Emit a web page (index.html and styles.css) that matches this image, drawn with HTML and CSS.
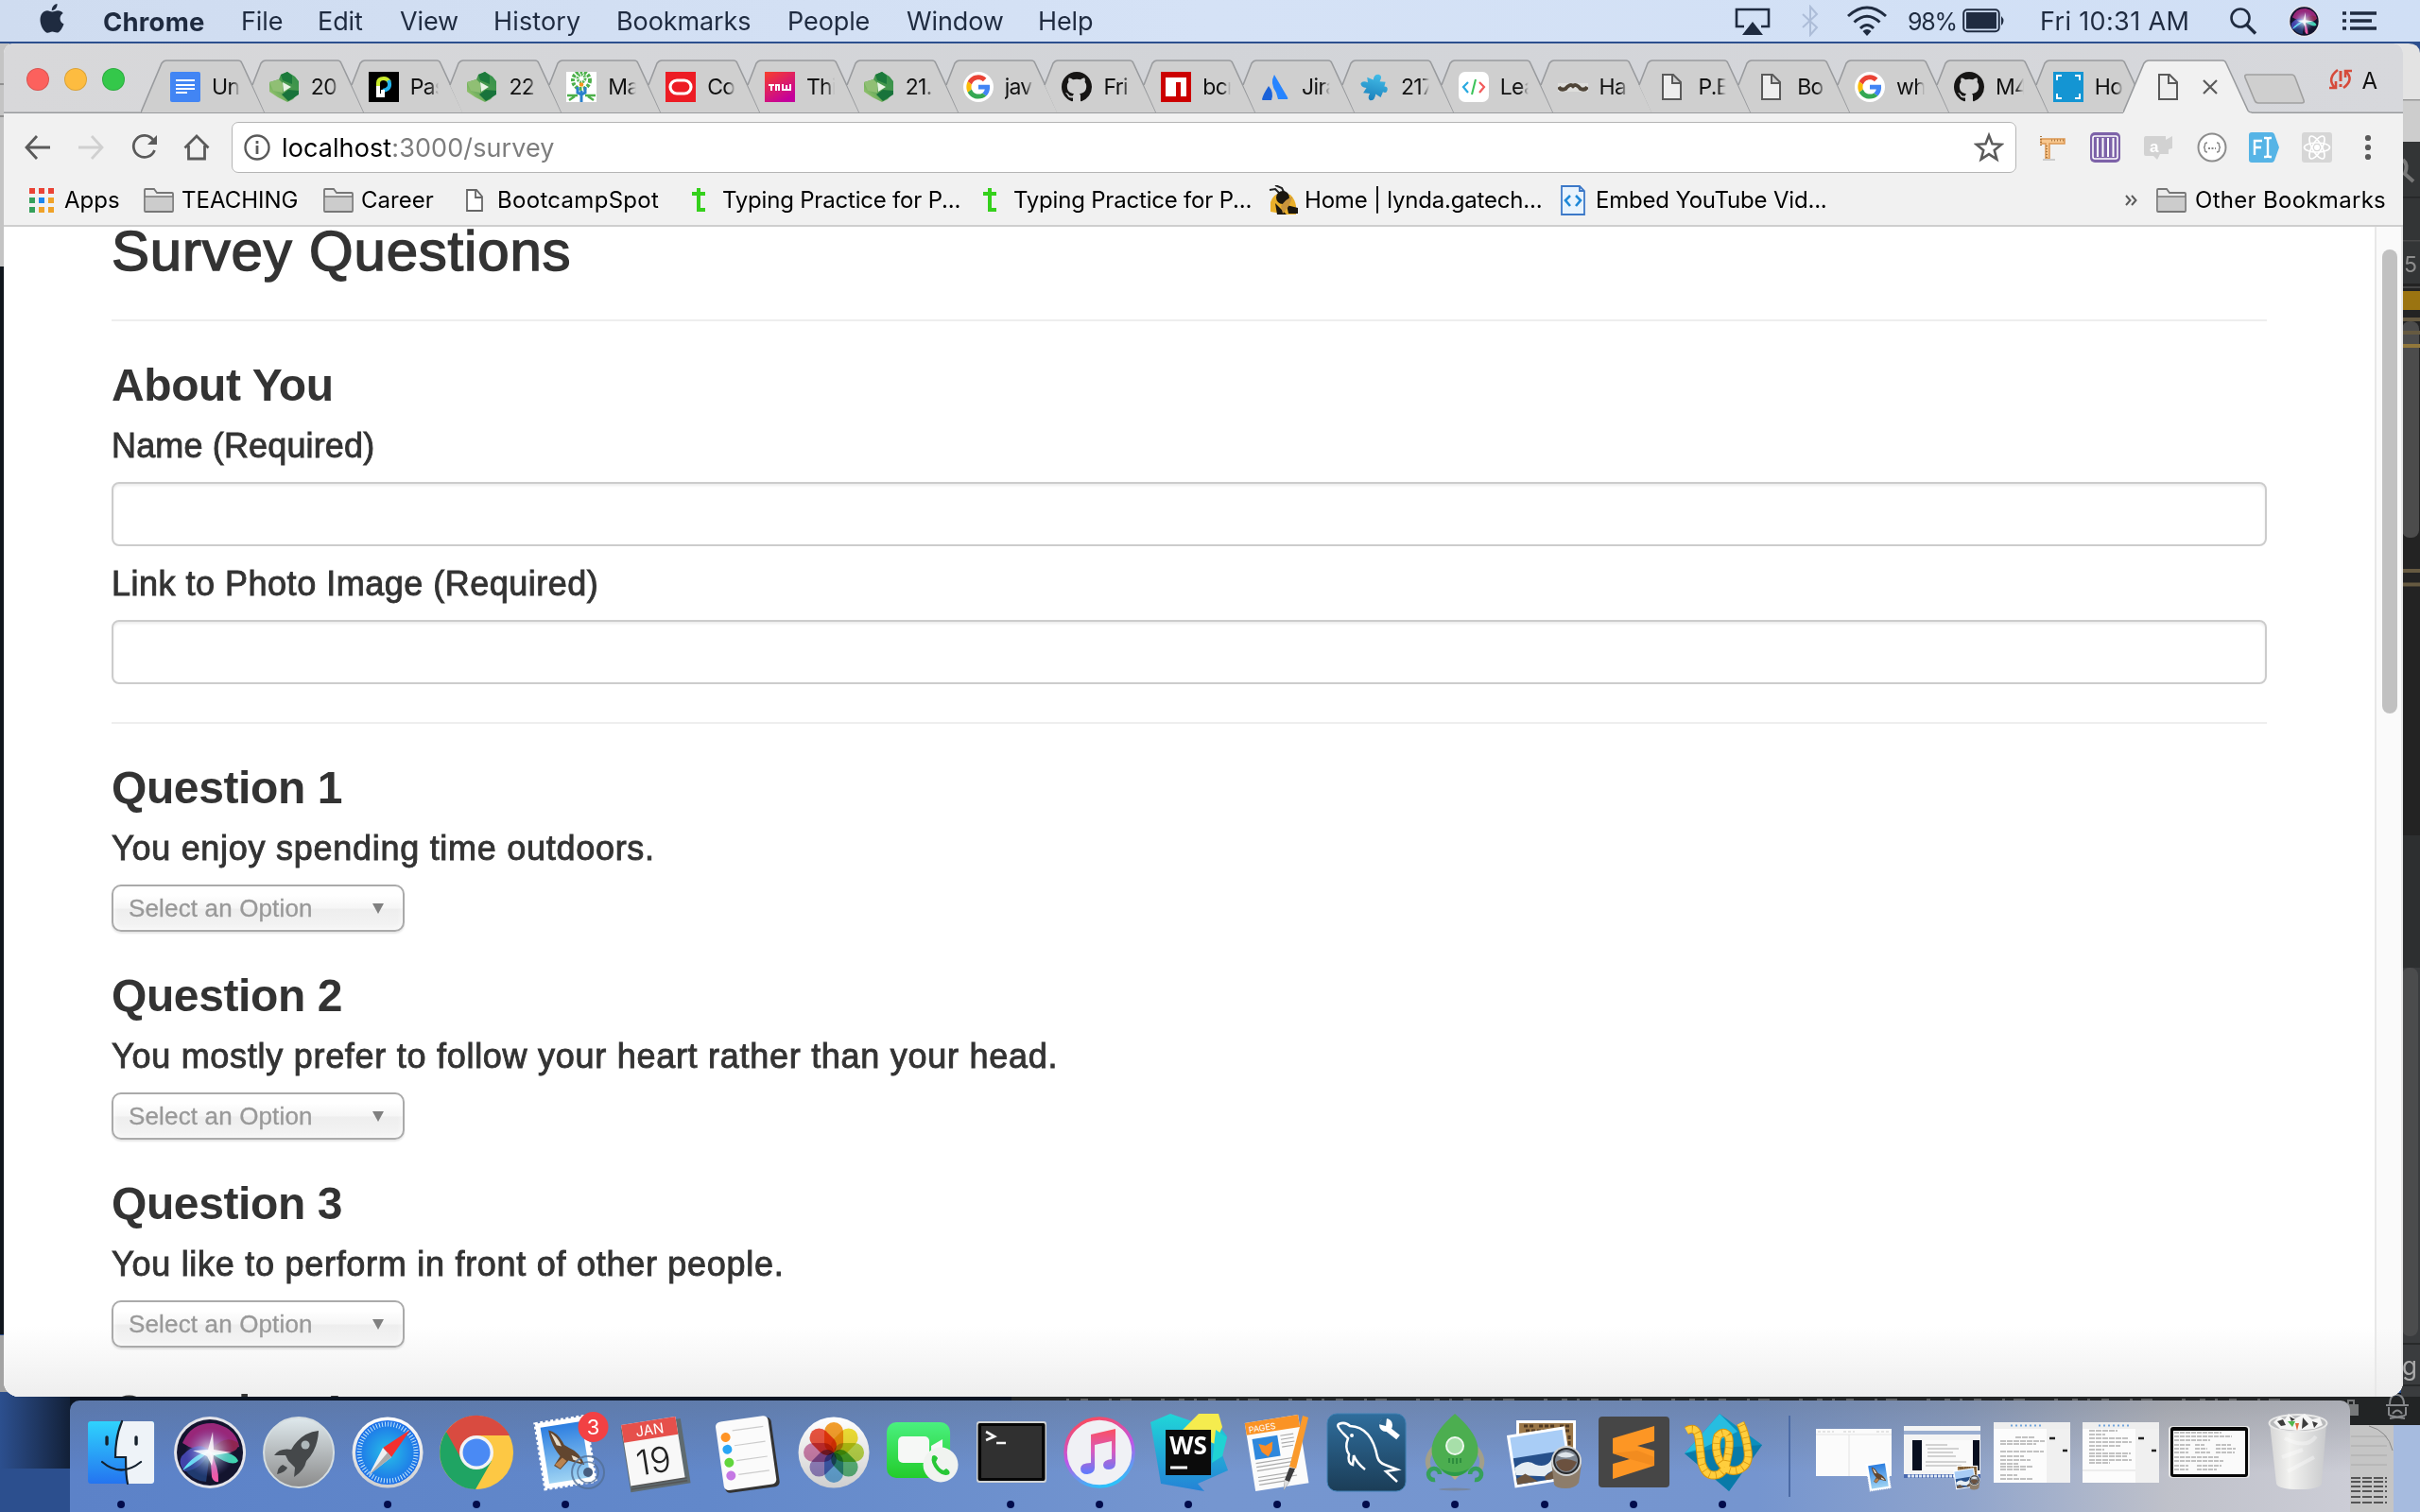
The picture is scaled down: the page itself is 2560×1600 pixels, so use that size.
FILE: index.html
```html
<!DOCTYPE html>
<html lang="en">
<head>
<meta charset="utf-8">
<title>Survey</title>
<link rel="stylesheet" href="styles.css">
</head>
<body>
<svg class="defs" width="0" height="0">
  <defs>
    <linearGradient id="gCam" x1="0" y1="1" x2="1" y2="0"><stop offset="0" stop-color="#b5d67c"/><stop offset=".5" stop-color="#4c9a4e"/><stop offset="1" stop-color="#2f8f4a"/></linearGradient>
    <radialGradient id="gSiri" cx=".5" cy=".5" r=".5"><stop offset="0" stop-color="#fff" stop-opacity=".9"/><stop offset=".4" stop-color="#c9e4fa" stop-opacity=".5"/><stop offset="1" stop-color="#7a6fd0" stop-opacity="0"/></radialGradient>
    <linearGradient id="gSilver" x1="0" y1="0" x2="0" y2="1"><stop offset="0" stop-color="#dfe9ed"/><stop offset="1" stop-color="#8b8b8b"/></linearGradient>
    <linearGradient id="gRim" x1="0" y1="0" x2="0" y2="1"><stop offset="0" stop-color="#fff"/><stop offset="1" stop-color="#cfcfcf"/></linearGradient>
    <linearGradient id="gSky" x1="0" y1="0" x2="0" y2="1"><stop offset="0" stop-color="#2c7ee0"/><stop offset="1" stop-color="#9ed3f3"/></linearGradient>
    <linearGradient id="gFinder" x1="0" y1="0" x2="0" y2="1"><stop offset="0" stop-color="#2fd3fd"/><stop offset="1" stop-color="#2474f0"/></linearGradient>
    <radialGradient id="gSafari"><stop offset="0" stop-color="#27c0e8"/><stop offset="1" stop-color="#1d6fe8"/></radialGradient>
    <linearGradient id="gFace" x1="0" y1="0" x2="0" y2="1"><stop offset="0" stop-color="#4af07f"/><stop offset="1" stop-color="#23cc2b"/></linearGradient>
    <linearGradient id="gItunes" x1=".3" y1="0" x2=".6" y2="1"><stop offset="0" stop-color="#fb4a5c"/><stop offset=".5" stop-color="#c054e8"/><stop offset="1" stop-color="#29c3fb"/></linearGradient>
    <linearGradient id="gNote" x1="0" y1="0" x2="0" y2="1"><stop offset="0" stop-color="#fb5060"/><stop offset=".5" stop-color="#d75ac0"/><stop offset="1" stop-color="#5b7bff"/></linearGradient>
    <linearGradient id="gSql" x1="0" y1="0" x2="0" y2="1"><stop offset="0" stop-color="#2f6d9c"/><stop offset="1" stop-color="#1b3d57"/></linearGradient>
    <linearGradient id="gWs" x1="0" y1="0" x2="0" y2="1"><stop offset="0" stop-color="#20d6d8"/><stop offset="1" stop-color="#2482d6"/></linearGradient>
    <linearGradient id="gTrash" x1="0" y1="0" x2="1" y2="0"><stop offset="0" stop-color="#d6d6d6"/><stop offset=".35" stop-color="#f2f2f0"/><stop offset="1" stop-color="#c9cacc"/></linearGradient>
    <linearGradient id="gTnw" x1="0" y1="0" x2=".6" y2="1"><stop offset="0" stop-color="#f8402b"/><stop offset="1" stop-color="#c4009c"/></linearGradient>
    <linearGradient id="gPuz" x1="0" y1="0" x2="0" y2="1"><stop offset="0" stop-color="#43bde8"/><stop offset="1" stop-color="#1b7fbb"/></linearGradient>
    <linearGradient id="gShade" x1="0" y1="0" x2="1" y2="0"><stop offset="0" stop-color="#111b2d" stop-opacity="0"/><stop offset="1" stop-color="#0b1422"/></linearGradient>
    <symbol id="tabFirst" viewBox="0 0 132 57"><path d="M0 56L22 4Q24 1 27 1H103Q106 1 107 4L131 56Z" fill="#cfcfcf"/><path d="M0 56L22 4Q24 1 27 1H103Q106 1 107 4L131 56" fill="none" stroke="#999b9e" stroke-width="1.6"/></symbol>
    <symbol id="tabNext" viewBox="0 0 132 57"><path d="M13 27L22 4Q24 1 27 1H103Q106 1 107 4L131 56H26Z" fill="#cfcfcf"/><path d="M13 27L22 4Q24 1 27 1H103Q106 1 107 4L131 56" fill="none" stroke="#999b9e" stroke-width="1.6"/></symbol>
    <symbol id="tabOn" viewBox="0 0 136 58"><path d="M0 58V56L22 4Q24 1 27 1H105Q108 1 109 4L132 54Q133 56 136 56V58Z" fill="#f1f1f1"/><path d="M0 56L22 4Q24 1 27 1H105Q108 1 109 4L132 54Q133 56 136 56" fill="none" stroke="#999b9e" stroke-width="1.6"/></symbol>
    <symbol id="cam" viewBox="0 0 32 32"><path d="M12 3L19 0L27 5L31 10V22L25 29L19 32L9 27L0 21V11L10 8Z" fill="url(#gCam)"/><path d="M12 3L19 0L24 4V13L14 9Z" fill="#1c7a3c"/><path d="M20 19L31 20V24L20 31L13 24Z" fill="#18733b"/><path d="M0 11L10 8L14 12V22L4 20Z" fill="#90bf74"/><path d="M14 11L23 16L15 21Z" fill="#e8f3e4"/></symbol>
    <symbol id="goog" viewBox="0 0 48 48"><circle cx="24" cy="24" r="24" fill="#fff"/><g transform="translate(5 5) scale(.79)"><path fill="#EA4335" d="M24 9.5c3.54 0 6.71 1.22 9.21 3.6l6.85-6.85C35.9 2.38 30.47 0 24 0 14.62 0 6.51 5.38 2.56 13.22l7.98 6.19C12.43 13.72 17.74 9.5 24 9.5z"/><path fill="#4285F4" d="M46.98 24.55c0-1.57-.15-3.09-.38-4.55H24v9.02h12.94c-.58 2.96-2.26 5.48-4.78 7.18l7.73 6c4.51-4.18 7.09-10.36 7.09-17.65z"/><path fill="#FBBC05" d="M10.53 28.59c-.48-1.45-.76-2.99-.76-4.59s.27-3.14.76-4.59l-7.98-6.19C.92 16.46 0 20.12 0 24c0 3.88.92 7.54 2.56 10.78l7.97-6.19z"/><path fill="#34A853" d="M24 48c6.48 0 11.93-2.13 15.89-5.81l-7.73-6c-2.15 1.45-4.92 2.3-8.16 2.3-6.26 0-11.57-4.22-13.47-9.91l-7.98 6.19C6.51 42.62 14.62 48 24 48z"/></g></symbol>
    <symbol id="gh" viewBox="0 0 16 16"><path fill="#161514" d="M8 0C3.58 0 0 3.58 0 8c0 3.54 2.29 6.53 5.47 7.59.4.07.55-.17.55-.38 0-.19-.01-.82-.01-1.49-2.01.37-2.53-.49-2.69-.94-.09-.23-.48-.94-.82-1.13-.28-.15-.68-.52-.01-.53.63-.01 1.08.58 1.23.82.72 1.21 1.87.87 2.33.66.07-.52.28-.87.51-1.07-1.78-.2-3.64-.89-3.64-3.95 0-.87.31-1.59.82-2.15-.08-.2-.36-1.02.08-2.12 0 0 .67-.21 2.2.82.64-.18 1.32-.27 2-.27.68 0 1.36.09 2 .27 1.53-1.04 2.2-.82 2.2-.82.44 1.1.16 1.92.08 2.12.51.56.82 1.27.82 2.15 0 3.07-1.87 3.75-3.65 3.95.29.25.54.73.54 1.48 0 1.07-.01 1.93-.01 2.2 0 .21.15.46.55.38A8.013 8.013 0 0016 8c0-4.42-3.58-8-8-8z"/></symbol>
    <symbol id="page" viewBox="0 0 32 32"><path d="M7 3H18L26 11V29H7ZM17 3V12H26" fill="#eee" stroke="#5a5a5a" stroke-width="2"/></symbol>
    <symbol id="folder" viewBox="0 0 32 26"><path d="M1 24V2Q1 1 2 1H11L14 5H30Q31 5 31 6V24Q31 25 30 25H2Q1 25 1 24Z" fill="#ececec" stroke="#777" stroke-width="1.8"/><path d="M1.800 9H30.200V24H1.800Z" fill="#ccc"/><path d="M1 9H31" stroke="#777" stroke-width="1.6"/></symbol>
    <symbol id="typing" viewBox="0 0 16 28"><path d="M7 1V24H14M0 7H14" fill="none" stroke="#35d01c" stroke-width="4"/></symbol>
    <symbol id="siri" viewBox="-38 -38 76 76"><circle r="38" fill="#e4e4ea"/><circle r="35" fill="#13142e"/><path d="M-29 -10Q-20 -32 4 -31Q28 -26 31 -6Q14 -2 0 -2Q-18 -2 -29 -10Z" fill="#b02a86" opacity=".85"/><path d="M2 -3Q16 -20 30 -10Q31 4 2 -1Z" fill="#8e2550"/><path d="M-30 4Q-14 -14 0 -2Q-8 18 -27 20Q-34 12 -30 4Z" fill="#4f4fc8" opacity=".8"/><path d="M-27 18Q-18 30 -4 31L0 0Z" fill="#274a8c" opacity=".7"/><path d="M0 -2Q10 16 9 31Q4 32 2 26Z" fill="#ee5aa8"/><path d="M0 0Q26 -2 30 9Q24 17 0 0Z" fill="#3fd3b0"/><path d="M-29 19Q-18 2 0 -2Q-10 8 -29 19Z" fill="#62e3f5"/><circle r="26" fill="url(#gSiri)"/><path d="M-18 -2L-2 -3L3 -22L4 -3L23 0L4 3L2 14L-3 4Z" fill="#fff" opacity=".8"/></symbol>
    <symbol id="mail" viewBox="-36 -44 72 88"><g transform="rotate(-9)"><rect x="-27" y="-35" width="54" height="70" fill="#fff" stroke="#fff" stroke-width="3" stroke-dasharray="3 2.500"/><rect x="-22" y="-30" width="44" height="60" fill="url(#gSky)"/><path d="M-14 -26Q-4 -22 0 -8L5 -4Q15 2 18 16L8 12L2 9L-8 17L-14 12L-6 3Q-14 -10 -14 -26Z" fill="#62462f"/><path d="M-12 -23Q-5 -17 -3 -7L-8 -9ZM6 4Q13 7 15 13L7 9Z" fill="#e6dccb"/><path d="M-13 11L-4 5L0 9L-8 16Z" fill="#b98350"/></g></symbol>
    <symbol id="preview" viewBox="-40 -42 80 84"><rect x="-30" y="-34" width="63" height="48" fill="#fff"/><rect x="-27" y="-31" width="57" height="42" fill="#9b7748"/><path d="M-22 -28h12m4 0h18m4 0h10M-20 -23h46M26 -18v22" stroke="#4f3821" stroke-width="3" stroke-dasharray="4 2"/><g transform="translate(0 -1) rotate(-9)"><rect x="-37" y="-23" width="62" height="56" fill="#fff"/><rect x="-34" y="-20" width="56" height="50" fill="#a9cdf6"/><path d="M-34 2H22V30H-34Z" fill="#26508b"/><path d="M-34 12Q-20 4 -12 12Q0 18 6 9L22 15V22Q4 18 -4 26L-34 20Z" fill="#e5edf3"/><path d="M-34 24L-24 20L-12 30H-34ZM-4 26L12 18L22 23V30H-4Z" fill="#6c5641"/></g><path d="M7 10L10 34Q12 38 22 38Q32 38 36 32L39 12Z" fill="#8d7d6b"/><circle cx="23" cy="9" r="16" fill="#d0d2d2"/><circle cx="23" cy="9" r="14" fill="#26282b"/><circle cx="23" cy="9" r="12" fill="#7d8691"/><path d="M12 10Q20 4 34 10Q30 20 22 20Q14 19 12 10Z" fill="#6b513f"/><path d="M13 3Q22 -4 32 3Q22 8 13 3Z" fill="#dde4ea"/></symbol>
  </defs>
</svg>

<div class="desktop">
  <svg class="backdrop" viewBox="0 0 2560 1600">
    <rect width="2560" height="1600" fill="#2c4f8e"/>
    <rect x="0" y="1474" width="90" height="80" fill="url(#gShade)"/>
    <rect x="74" y="1474" width="2486" height="34" fill="#0b1422"/>
    <path d="M0 46H10V282H0Z" fill="#c4c4c4"/><path d="M0 88H10V90H0ZM0 122H10V124H0Z" fill="#909090"/>
    <rect y="282" width="10" height="1130" fill="#10161d"/><rect y="1413" width="10" height="60" fill="#a3a3a3"/>
    <path d="M2530 46H2548Q2559 46 2560 56V150H2530Z" fill="#e3e3e3"/>
    <rect x="2540" y="105" width="20" height="45" fill="#cdcdcd"/><rect x="2540" y="105" width="20" height="1.500" fill="#999"/>
    <rect x="2540" y="150" width="20" height="150" fill="#333536"/><rect x="2540" y="208" width="20" height="1.500" fill="#242526"/><rect x="2540" y="254" width="20" height="1.500" fill="#4a4a4a"/>
    <path d="M2542 169Q2548 174 2544 184L2553 192" fill="none" stroke="#777" stroke-width="4"/>
    <rect x="2540" y="300" width="20" height="724" fill="#232323"/><rect x="2540" y="303" width="20" height="2" fill="#454545"/>
    <rect x="2540" y="308" width="20" height="20" fill="#9b7411"/>
    <rect x="2541" y="340" width="18" height="229" rx="8" fill="#4c4c4c"/>
    <path d="M2540 338H2560M2540 352H2560M2540 604H2560M2540 618.500H2560" stroke="#665a41" stroke-width="4"/><path d="M2540 366H2560" stroke="#92783b" stroke-width="4"/>
    <rect x="2540" y="884" width="20" height="140" fill="#2d2f30"/><rect x="2540" y="1024" width="20" height="484" fill="#3a3c3e"/>
    <rect x="2541" y="1024" width="17" height="390" rx="8" fill="#4b4c4d"/><path d="M2540 1422H2560M2540 1466H2560" stroke="#27292a" stroke-width="2"/>
    <text x="2543" y="288" class="bgText">5</text><text x="2541" y="1455" class="bgText big">g</text>
    <rect x="1070" y="1478" width="1490" height="30" fill="#222425"/>
    <path d="M1128 1481H2430" stroke="#5c5d5e" stroke-width="2" stroke-dasharray="3 12 8 22 3 9 12 31 4 15 6 10"/>
    <rect x="2482" y="1486" width="13" height="12" fill="#77797a"/><path d="M2484 1488V1482H2490V1486" fill="none" stroke="#77797a" stroke-width="2"/>
    <path d="M2528 1486Q2528 1476 2535 1476Q2543 1476 2543 1486M2524 1487H2548M2527 1489V1497Q2536 1503 2545 1497V1489M2531 1496Q2536 1489 2541 1496M2528 1501L2544 1498M2528 1498L2544 1501" fill="none" stroke="#85878a" stroke-width="2"/>
    <rect x="2480" y="1508" width="80" height="92" fill="#a6bbdf"/><rect x="2480" y="1508" width="52" height="92" fill="#c5c5c5"/>
    <path d="M2487 1520H2525M2487 1530H2525M2487 1540H2525M2487 1550H2525" stroke="#aaa" stroke-width="1"/><path d="M2506 1509Q2526 1514 2531 1535" fill="none" stroke="#888"/>
    <path d="M2487 1564H2525M2487 1568H2525M2487 1573H2525M2487 1578H2525M2487 1584H2525M2487 1590H2525" stroke="#555" stroke-width="2" stroke-dasharray="10 2"/>
  </svg>

  <header class="menubar">
    <svg class="apple" viewBox="0 0 25 32"><path d="M12.600 8.500C14.500 8.500 16.500 7 19 7.200C21 7.300 23 8.200 24.200 10C19.500 13 20.300 19.500 25 21.300C24 24.500 21.500 29.500 18.700 30.500C16.500 31 15 29.600 12.900 29.600C10.500 29.600 9.300 31.200 7.200 30.800C3.500 29.500 0 22.500 0 17C0 11 3.500 7.300 7.500 7.200C9.500 7.200 11.500 8.500 12.600 8.500ZM12.300 7.200C12 3.700 14.700 .5 18 0C18.400 3.800 15.500 7.200 12.300 7.200Z" fill="#1f2b40"/></svg>
    <b class="app">Chrome</b><span>File</span><span>Edit</span><span>View</span><span class="history">History</span><span>Bookmarks</span><span>People</span><span>Window</span><span>Help</span>
    <svg width="38" height="32" viewBox="0 0 38 32"><path d="M10 22H2V4H36V22H28" fill="none" stroke="#1f2b40" stroke-width="2.600"/><path d="M19 17L30 31H8Z" fill="#1f2b40"/></svg>
    <svg width="22" height="34" viewBox="0 0 22 34"><path d="M3 10L18 24L11 32V2L18 10L3 24" fill="none" stroke="#adbdd8" stroke-width="2"/></svg>
    <svg width="44" height="32" viewBox="0 0 44 32"><path d="M2 11Q22 -7 42 11M8.500 17.500Q22 5 35.500 17.500M15 24Q22 17 29 24" fill="none" stroke="#1f2b40" stroke-width="3"/><path d="M17.500 27Q22 23 26.500 27L22 32Z" fill="#1f2b40"/></svg>
    <span class="pct">98%</span>
    <svg width="46" height="26" viewBox="0 0 46 26"><rect x="1.200" y="1.200" width="37.500" height="23" rx="4" fill="none" stroke="#1f2b40" stroke-width="2"/><rect x="4" y="4" width="32" height="17.500" fill="#1f2b40"/><path d="M41 8Q46 13 41 18Z" fill="#1f2b40"/></svg>
    <span class="clock">Fri 10:31 AM</span>
    <svg width="32" height="30" viewBox="0 0 32 30"><circle cx="12" cy="12" r="9.500" fill="none" stroke="#1f2b40" stroke-width="2.600"/><path d="M18.500 19L28 28.500" stroke="#1f2b40" stroke-width="3.400"/></svg>
    <svg width="33" height="33"><use href="#siri"/></svg>
    <svg width="38" height="22" viewBox="0 0 38 22"><path d="M1 3H5M1 11H5M1 19H5M9 3H37M9 11H32M9 19H37" stroke="#1f2b40" stroke-width="3.600"/></svg>
  </header>

  <main class="window">
    <div class="tabstrip">
      <div class="lights"><i class="red"></i><i class="amber"></i><i class="green"></i></div>
      <div class="tabs">
        <div class="tab"><svg class="shape"><use href="#tabFirst"/></svg><svg class="fav" viewBox="0 0 32 32"><rect width="32" height="32" rx="2" fill="#4285f4"/><path d="M6 9H26M6 14H26M6 18H26M6 22H18" stroke="#fff" stroke-width="2"/></svg><span>Un</span></div>
        <div class="tab"><svg class="shape"><use href="#tabNext"/></svg><svg class="fav"><use href="#cam"/></svg><span>20</span></div>
        <div class="tab"><svg class="shape"><use href="#tabNext"/></svg><svg class="fav" viewBox="0 0 32 32"><rect width="32" height="32"/><path d="M10 18V12Q10 7 16 7Q20 7 22 11" fill="none" stroke="#c9ec2c" stroke-width="4"/><path d="M21 9Q25 18 15 20" fill="none" stroke="#22b5ee" stroke-width="4"/><path d="M10 15V25H15V19" fill="none" stroke="#fff" stroke-width="4"/></svg><span>Pas</span></div>
        <div class="tab"><svg class="shape"><use href="#tabNext"/></svg><svg class="fav"><use href="#cam"/></svg><span>22</span></div>
        <div class="tab"><svg class="shape"><use href="#tabNext"/></svg><svg class="fav" viewBox="0 0 32 32"><rect width="32" height="32" fill="#fff"/><circle cx="16" cy="9" r="9" fill="none" stroke="#4cb04a" stroke-width="4" stroke-dasharray="3 1.500"/><circle cx="16" cy="7" r="4" fill="none" stroke="#58b957" stroke-width="3" stroke-dasharray="2 1"/><circle cx="16" cy="13.500" r="2.300" fill="#f79420"/><path d="M16 32V20M12 16V22L16 24L20 22V16" fill="none" stroke="#2a80cc" stroke-width="3"/><path d="M1 25H12M20 25H31M3 30L9 26M29 30L23 26" stroke="#4cb04a" stroke-width="2.400"/></svg><span>Ma</span></div>
        <div class="tab"><svg class="shape"><use href="#tabNext"/></svg><svg class="fav" viewBox="0 0 32 32"><rect width="32" height="32" fill="#ed1c24"/><rect x="5" y="9" width="22" height="14" rx="7" fill="none" stroke="#fff" stroke-width="3.200"/></svg><span>Co</span></div>
        <div class="tab"><svg class="shape"><use href="#tabNext"/></svg><svg class="fav" viewBox="0 0 32 32"><rect width="32" height="32" fill="url(#gTnw)"/><path d="M4 14H10M7 14V20M12 20V14H15V20M19 13V19H27V13M23 14V19" fill="none" stroke="#fff" stroke-width="2"/></svg><span>Thi</span></div>
        <div class="tab"><svg class="shape"><use href="#tabNext"/></svg><svg class="fav"><use href="#cam"/></svg><span>21.</span></div>
        <div class="tab"><svg class="shape"><use href="#tabNext"/></svg><svg class="fav"><use href="#goog"/></svg><span>jav</span></div>
        <div class="tab"><svg class="shape"><use href="#tabNext"/></svg><svg class="fav"><use href="#gh"/></svg><span>Fri</span></div>
        <div class="tab"><svg class="shape"><use href="#tabNext"/></svg><svg class="fav" viewBox="0 0 32 32"><rect width="32" height="32" fill="#c00"/><path d="M5 6H27V26H21V11H16V26H5Z" fill="#fff"/></svg><span>bcr</span></div>
        <div class="tab"><svg class="shape"><use href="#tabNext"/></svg><svg class="fav" viewBox="0 0 32 32"><path d="M15 3Q10 12 17 22L19 29H28Q30 29 29 27Z" fill="#2684ff"/><path d="M9 15Q3 24 2 29Q2 30 3 30H12Q15 22 9 15Z" fill="#1b62d8"/></svg><span>Jira</span></div>
        <div class="tab"><svg class="shape"><use href="#tabNext"/></svg><svg class="fav" viewBox="0 0 32 32"><path d="M13 9Q12 3 17 2Q22 2 20 9L26 8L26 13Q30 12 30 16Q30 20 26 19L25 25L19 23Q20 30 15 31Q11 30 13 24L6 25L8 19Q2 20 1 16Q2 12 8 13L6 8Z" fill="url(#gPuz)" transform="rotate(14 16 16)"/></svg><span>217</span></div>
        <div class="tab"><svg class="shape"><use href="#tabNext"/></svg><svg class="fav" viewBox="0 0 32 32"><rect width="32" height="32" rx="7" fill="#fff"/><path d="M10 11L5 16L10 22" fill="none" stroke="#29a9e0" stroke-width="2.200"/><path d="M18 8L14 24" stroke="#3cc35a" stroke-width="2"/><path d="M22 11L27 16L22 22" fill="none" stroke="#f25b5b" stroke-width="2.200"/></svg><span>Lea</span></div>
        <div class="tab"><svg class="shape"><use href="#tabNext"/></svg><svg class="fav" viewBox="0 0 32 32"><path d="M0 12H32V21H0Z" fill="#dededc"/><path d="M1 16Q3 20 8 18Q13 12 16 15Q19 12 24 18Q29 20 31 16" fill="none" stroke="#4e4437" stroke-width="4"/></svg><span>Hal</span></div>
        <div class="tab"><svg class="shape"><use href="#tabNext"/></svg><svg class="fav"><use href="#page"/></svg><span>P.E</span></div>
        <div class="tab"><svg class="shape"><use href="#tabNext"/></svg><svg class="fav"><use href="#page"/></svg><span>Bo</span></div>
        <div class="tab"><svg class="shape"><use href="#tabNext"/></svg><svg class="fav"><use href="#goog"/></svg><span>wh</span></div>
        <div class="tab"><svg class="shape"><use href="#tabNext"/></svg><svg class="fav"><use href="#gh"/></svg><span>M4</span></div>
        <div class="tab"><svg class="shape"><use href="#tabNext"/></svg><svg class="fav" viewBox="0 0 32 32"><rect width="32" height="32" fill="#1495d3"/><path d="M4 9V4H9M23 4H28V9M28 23V28H23M9 28H4V23" fill="none" stroke="#fff" stroke-width="2"/></svg><span>Ho</span></div>
        <div class="tab on"><svg class="shape"><use href="#tabOn"/></svg><svg class="fav"><use href="#page"/></svg><svg class="close" viewBox="0 0 16 16"><path d="M1 1L15 15M15 1L1 15" stroke="#5a5a5a" stroke-width="2.200"/></svg></div>
      </div>
      <svg class="newtab" viewBox="0 0 68 34"><path d="M4 1H51Q54 1 55 4L64 28Q65 31 62 31H16Q13 31 12 28L2 4Q1 1 4 1Z" fill="#cfcfcf" stroke="#a0a0a0" stroke-width="1.600"/></svg>
      <svg class="sync" viewBox="0 0 26 24"><path d="M10 2Q-2 11 7 21M1 21H8V14M16 21Q28 12 18 3M25 3H18V10" fill="none" stroke="#d64b3b" stroke-width="2.600"/><path d="M13 3V14M13 17V20" stroke="#d64b3b" stroke-width="3"/></svg>
      <span class="profile">A</span>
    </div>

    <div class="toolbar">
      <svg width="32" height="28" viewBox="0 0 32 28"><path d="M15 2L4 14L15 26M4 14H29" fill="none" stroke="#5a5a5a" stroke-width="2.800"/></svg>
      <svg width="32" height="28" viewBox="0 0 32 28"><path d="M16 2L27 14L16 26M27 14H2" fill="none" stroke="#d0d0d0" stroke-width="2.800"/></svg>
      <svg width="32" height="30" viewBox="0 0 32 30"><path d="M25 7A11.500 11.500 0 1 0 26.500 18" fill="none" stroke="#5a5a5a" stroke-width="2.800"/><path d="M29 2V12H19Z" fill="#5a5a5a"/></svg>
      <svg width="30" height="30" viewBox="0 0 30 30"><path d="M2.500 15.500L15 3L27.500 15.500M6.500 13V27H23.500V13" fill="none" stroke="#5a5a5a" stroke-width="2.800"/></svg>
      <div class="url">
        <svg width="28" height="28" viewBox="0 0 28 28"><circle cx="14" cy="14" r="12.500" fill="none" stroke="#5a5a5a" stroke-width="2.400"/><path d="M14 12V21M14 7V10" stroke="#5a5a5a" stroke-width="2.800"/></svg>
        <p>localhost<em>:3000/survey</em></p>
        <svg class="star" viewBox="0 0 30 30"><path d="M15 3L18.300 11.500L27.500 12L20.400 17.800L22.800 26.800L15 21.700L7.200 26.800L9.600 17.800L2.500 12L11.700 11.500Z" fill="none" stroke="#5a5a5a" stroke-width="2.400"/></svg>
      </div>
      <svg width="32" height="32" viewBox="0 0 32 32"><path d="M3 7H28V12H12V28H8V12H3Z" fill="#f8c890" stroke="#dc9650" stroke-width="1.500"/><path d="M3 4V14M14 8.500H28M9 14V27" stroke="#a87840" stroke-dasharray="1 2" stroke-width="2"/><path d="M5 29H18" stroke="#ccc" stroke-width="2"/></svg>
      <svg width="32" height="32" viewBox="0 0 32 32"><rect width="32" height="32" rx="5" fill="#7d62a8"/><rect x="3" y="4" width="26" height="24" rx="2" fill="none" stroke="#fff" stroke-width="1.600"/><path d="M8 6V26M13.500 6V26M19 6V26M24.500 6V26" stroke="#fff" stroke-width="2"/></svg>
      <svg width="32" height="32" viewBox="0 0 32 32"><path d="M3 4H24V8L31 4V17L27 18V23H18L15 29L11 25H3Q1 25 1 23V7Q1 4 3 4Z" fill="#d2d2d2"/><text x="7" y="21" class="extA">a</text></svg>
      <svg width="32" height="32" viewBox="0 0 32 32"><circle cx="16" cy="16" r="14.500" fill="#fff" stroke="#8d8d8d" stroke-width="2"/><path d="M11 11Q8 11 8.500 14Q8 16 7 16Q8 16 8.500 18Q8 21 11 21M21 11Q24 11 23.500 14Q24 16 25 16Q24 16 23.500 18Q24 21 21 21" fill="none" stroke="#888" stroke-width="1.500"/><path d="M12 17H20" stroke="#888" stroke-width="1.800" stroke-dasharray="2 1.500"/></svg>
      <svg width="32" height="32" viewBox="0 0 32 32"><path d="M3 0H24Q26 0 27 2L32 16L27 30Q26 32 24 32H3Q0 32 0 29V3Q0 0 3 0Z" fill="#56b4e6"/><path d="M6 24V9H14M6 16H13M16 6H19Q20 6 20 8V24Q20 26 18 26H16M24 6H22Q20 6 20 8M24 26H22Q20 26 20 24" fill="none" stroke="#fff" stroke-width="2.400"/></svg>
      <svg width="32" height="32" viewBox="0 0 32 32"><rect width="32" height="32" rx="3" fill="#d6d6d6"/><g fill="none" stroke="#fff" stroke-width="1.700"><ellipse cx="16" cy="16" rx="13.500" ry="5"/><ellipse cx="16" cy="16" rx="13.500" ry="5" transform="rotate(60 16 16)"/><ellipse cx="16" cy="16" rx="13.500" ry="5" transform="rotate(120 16 16)"/></g><circle cx="16" cy="16" r="3" fill="#fff"/></svg>
      <svg width="22" height="28" viewBox="0 0 22 28"><g fill="#5a5a5a"><circle cx="11" cy="4" r="3.100"/><circle cx="11" cy="14" r="3.100"/><circle cx="11" cy="24" r="3.100"/></g></svg>
    </div>

    <nav class="bookmarks">
      <svg width="26" height="26" viewBox="0 0 26 26"><path d="M0 0h6v6H0zM10 0h6v6h-6zM20 0h6v6h-6z" fill="#ea4335"/><path d="M0 10h6v6H0zM0 20h6v6H0z" fill="#34a05a"/><path d="M10 10h6v6h-6z" fill="#1a86ee"/><path d="M20 10h6v6h-6zM10 20h6v6h-6zM20 20h6v6h-6z" fill="#f0a228"/></svg><span>Apps</span>
      <svg width="32" height="26"><use href="#folder"/></svg><span>TEACHING</span>
      <svg width="32" height="26"><use href="#folder"/></svg><span>Career</span>
      <svg width="18" height="24" viewBox="0 0 18 24"><path d="M1 1H11L17 8V23H1ZM10 1V9H17" fill="#fff" stroke="#666" stroke-width="1.800"/></svg><span class="wide">BootcampSpot</span>
      <svg width="16" height="28"><use href="#typing"/></svg><span class="tight">Typing Practice for P...</span>
      <svg width="16" height="28"><use href="#typing"/></svg><span class="tight">Typing Practice for P...</span>
      <svg width="32" height="32" viewBox="0 0 32 32"><path d="M2 5L8 4L14 10M8 0L15 3L18 9" fill="none" stroke="#222" stroke-width="2"/><path d="M3 18Q6 9 14 8L24 10Q29 15 30 22V31H20L3 28Z" fill="#eab02a"/><circle cx="16" cy="13" r="7" fill="#1b1710"/><path d="M8 19L20 31H10ZM20 21L32 24V30H22Z" fill="#1b1710"/><path d="M14 22Q20 14 26 12Q24 22 16 30Z" fill="#c8943c"/></svg><span class="tight">Home | lynda.gatech...</span>
      <svg width="26" height="32" viewBox="0 0 26 32"><path d="M1 1H20L25 6V31H1Z" fill="#e8f3fd" stroke="#3b78c8" stroke-width="1.800"/><path d="M20 1V6H25" fill="none" stroke="#3b78c8" stroke-width="1.800"/><path d="M10 11L5 16L10 22M16 11L21 16L16 22" fill="none" stroke="#1e88d8" stroke-width="2.600"/></svg><span class="tight">Embed YouTube Vid...</span>
      <svg width="13" height="14" viewBox="0 0 13 14"><path d="M1 2L5.500 7L1 12M7 2L11.500 7L7 12" fill="none" stroke="#5a5a5a" stroke-width="2"/></svg>
      <svg width="32" height="26"><use href="#folder"/></svg><span class="wide">Other Bookmarks</span>
    </nav>

    <div class="viewport">
      <form class="survey">
        <h1>Survey Questions</h1>
        <hr>
        <h2 class="about">About You</h2>
        <h3 class="n1">Name (Required)</h3>
        <input type="text">
        <h3 class="n2">Link to Photo Image (Required)</h3>
        <input type="text">
        <hr class="second">
        <section><h2>Question 1</h2><h3>You enjoy spending time outdoors.</h3><div class="select">Select an Option<i></i></div></section>
        <section><h2>Question 2</h2><h3>You mostly prefer to follow your heart rather than your head.</h3><div class="select">Select an Option<i></i></div></section>
        <section><h2>Question 3</h2><h3>You like to perform in front of other people.</h3><div class="select">Select an Option<i></i></div></section>
        <section><h2>Question 4</h2></section>
      </form>
      <div class="track"><div class="thumb"></div></div>
    </div>
  </main>

  <footer class="dock">
    <svg class="app-icon" viewBox="-47 0 94 118"><rect x="-35" y="22" width="70" height="66" rx="3" fill="url(#gFinder)"/><path d="M1 22H32Q35 22 35 25V85Q35 88 32 88H7Q5 80 5 60H-6Q-5 36 1 22Z" fill="#eef3f8"/><path d="M-15 39V46M16 39V46" stroke="#15202b" stroke-width="3.400" stroke-linecap="round"/><path d="M-20 65Q0 82 21 65M1 22Q-6 38 -6 60H5Q5 80 7 88" fill="none" stroke="#13202e" stroke-width="2.200" stroke-linecap="round"/><circle cy="110" r="4" fill="#020c4c"/></svg>
    <svg class="app-icon" viewBox="-47 0 94 118"><use href="#siri" x="-38" y="17" width="76" height="76"/></svg>
    <svg class="app-icon" viewBox="-47 0 94 118"><circle cy="55" r="37" fill="url(#gSilver)" stroke="#d5dde0" stroke-width="2"/><path d="M21 32Q2 34 -8 52Q-20 50 -26 58L-14 58L-11 64L-4 71L-5 81Q6 74 8 64Q20 52 21 32Z" fill="#45484a"/><circle cx="7" cy="47" r="4.500" fill="#aeb8bb"/><path d="M-17 68Q-22 70 -23 78Q-14 76 -12 71Z" fill="#45484a"/></svg>
    <svg class="app-icon" viewBox="-47 0 94 118"><circle cy="55" r="37.500" fill="url(#gRim)"/><circle cy="55" r="34" fill="url(#gSafari)"/><circle cy="55" r="30" fill="none" stroke="#c8e8fa" stroke-width="5" stroke-dasharray="1 2.140"/><path d="M24 31L-5 50L4 60Z" fill="#f3302e"/><path d="M-20 79L-5 50L4 60Z" fill="#eef0f2"/><path d="M-20 79L0 55L4 60Z" fill="#aaa"/><circle cy="110" r="4" fill="#020c4c"/></svg>
    <svg class="app-icon" viewBox="-47 0 94 118"><circle cy="55" r="39" fill="#fdc844"/><path d="M-32 33A39 39 0 0 0 -1 94L16 64L0 55Z" fill="#1fa463"/><path d="M-32 33L-16 62L0 55V37H35A39 39 0 0 0 -32 33Z" fill="#d94b40"/><circle cy="55" r="18" fill="#f3f3f3"/><circle cy="55" r="14.500" fill="#4a8af4"/><circle cy="110" r="4" fill="#020c4c"/></svg>
    <svg class="app-icon" viewBox="-47 0 94 118"><use href="#mail" x="-36" y="11" width="72" height="88"/><circle cx="24" cy="76" r="17" fill="none" stroke="#526f96" stroke-width="2" opacity=".8"/><circle cx="24" cy="76" r="11" fill="none" stroke="#526f96" stroke-width="1.500" opacity=".8"/><circle cx="24" cy="76" r="5" fill="#465e80"/><circle cx="29.500" cy="28" r="16" fill="#f24144"/><text x="29.500" y="36" class="badge">3</text><circle cy="110" r="4" fill="#020c4c"/></svg>
    <svg class="app-icon" viewBox="-47 0 94 118"><g transform="translate(-2 55) rotate(-9)"><path d="M-30 -31H34V38H-30Z" fill="#5f6b70"/><rect x="-29" y="-34" width="58" height="66" fill="#f8f8f8"/><rect x="-29" y="-34" width="58" height="19" fill="#e6504b"/><path d="M-29 32H31M-29 35H31" stroke="#555" stroke-width="1.500"/><text x="0" y="-19" class="calM">JAN</text><text x="-1" y="22" class="calD">19</text></g></svg>
    <svg class="app-icon" viewBox="-47 0 94 118"><g transform="translate(3 55) rotate(-8)"><rect x="-28" y="-34" width="58" height="74" rx="5" fill="#333"/><rect x="-29" y="-36" width="56" height="73" rx="5" fill="#fbfbfb"/><path d="M-12 -25H21M-12 -9H21M-12 7H21M-12 22H21" stroke="#ccc" stroke-width="1.200"/><circle cx="-20" cy="-19" r="5" fill="#ff9425"/><circle cx="-20" cy="-6" r="5" fill="#28a5f5"/><circle cx="-20" cy="8" r="5" fill="#61d63c"/><circle cx="-20" cy="22" r="5" fill="#c578e4"/></g></svg>
    <svg class="app-icon" viewBox="-47 0 94 118"><circle cx="1" cy="55" r="37.500" fill="url(#gRim)"/><g transform="translate(1 55)" class="petals"><rect x="-10" y="-32" width="20" height="32" rx="10" fill="#f6a02c"/><rect x="-10" y="-32" width="20" height="32" rx="10" fill="#f2e135" transform="rotate(45)"/><rect x="-10" y="-32" width="20" height="32" rx="10" fill="#bcd94a" transform="rotate(90)"/><rect x="-10" y="-32" width="20" height="32" rx="10" fill="#5fbd80" transform="rotate(135)"/><rect x="-10" y="-32" width="20" height="32" rx="10" fill="#6bb1e4" transform="rotate(180)"/><rect x="-10" y="-32" width="20" height="32" rx="10" fill="#9b88c8" transform="rotate(225)"/><rect x="-10" y="-32" width="20" height="32" rx="10" fill="#d383b0" transform="rotate(270)"/><rect x="-10" y="-32" width="20" height="32" rx="10" fill="#ee5540" transform="rotate(315)"/></g></svg>
    <svg class="app-icon" viewBox="-47 0 94 118"><rect x="-37" y="23" width="67" height="59" rx="10" fill="url(#gFace)"/><rect x="-25" y="38" width="33" height="28" rx="5" fill="#f6f8f6"/><path d="M10 48L22 41V62L10 56Z" fill="#f6f8f6"/><circle cx="20" cy="68" r="18.500" fill="#f0f3f0"/><path d="M11 59Q14 56 17 61L15 65Q18 72 23 74L26 72Q31 75 29 78Q23 81 16 74Q9 66 11 59Z" fill="#27c736"/></svg>
    <svg class="app-icon" viewBox="-47 0 94 118"><rect x="-36" y="22" width="74" height="65" rx="3" fill="#d0d3d4"/><rect x="-34.500" y="24" width="71" height="61" rx="2" fill="#060606"/><rect x="-31" y="27" width="64" height="55" fill="#303030"/><path d="M-26 33L-17 38L-26 42M-15 45H-5" fill="none" stroke="#f4f4f4" stroke-width="2.600"/><circle cy="110" r="4" fill="#020c4c"/></svg>
    <svg class="app-icon" viewBox="-47 0 94 118"><circle cy="55" r="36" fill="#f0f1f5" stroke="url(#gItunes)" stroke-width="3.500"/><path d="M-9 36L17 30V66Q17 73 10 73Q4 73 4 68Q4 63 13 62V43L-5 47V71Q-5 77 -13 78Q-20 78 -20 72Q-20 66 -9 66Z" fill="url(#gNote)"/><circle cy="110" r="4" fill="#020c4c"/></svg>
    <svg class="app-icon" viewBox="-47 0 94 118"><path d="M-40 23L-19 14L4 22L26 18L41 38L34 52L42 74L10 88L17 96L-29 88Z" fill="url(#gWs)"/><path d="M-6 31L11 14H32L36 28L28 46Z" fill="#f5ec4e"/><path d="M29 31L41 39L36 59L25 66Z" fill="#20d2d3"/><rect x="-24" y="31" width="48" height="48" fill="#0b0b0b"/><text x="0" y="57" class="ws">WS</text><path d="M-19 71H-1" stroke="#fff" stroke-width="3"/><circle cy="110" r="4" fill="#020c4c"/></svg>
    <svg class="app-icon" viewBox="-47 0 94 118"><g transform="translate(0 55) rotate(-9)"><rect x="-29" y="-36" width="57" height="73" fill="#fbfbfb"/><rect x="-29" y="-36" width="57" height="13" fill="#fa9325"/><text x="-26" y="-25" class="pages">PAGES</text><rect x="-24" y="-18" width="27" height="22" fill="#2f88dc"/><path d="M-18 -12L-11 -9L-3 -12L-5 -3L-10 3L-16 -3Z" fill="#fb8d27"/><path d="M6 -17H20M6 -13H20M6 -9H20M6 -5H18M-24 8H17M-24 12H17M-24 16H13M-24 23H15M-24 27H17M-24 31H6" stroke="#aaa" stroke-width="1.200"/></g><path d="M27 16L33 18L20 72L13 70Z" fill="#fa9a2c"/><path d="M13 71L19 72L13 86L7 95L8 84Z" fill="#3b3b3d"/><path d="M8 84L13 86L7 95Z" fill="#ddd"/><circle cy="110" r="4" fill="#020c4c"/></svg>
    <svg class="app-icon" viewBox="-47 0 94 118"><rect x="-41" y="14" width="83" height="82" rx="10" fill="url(#gSql)" stroke="#3e80b3"/><path d="M-1 73Q-10 66 -13 58L-14 68Q-20 66 -18 57Q-23 50 -19 40L-23 36Q-32 27 -29 25Q-22 22 -17 27Q6 28 12 60Q14 66 20 68L33 73L21 75L33 86" fill="none" stroke="#fff" stroke-width="2.500"/><circle cx="-15" cy="37" r="2" fill="#fff"/><path d="M20 28L34 39" stroke="#fff" stroke-width="6"/><circle cx="21" cy="26" r="7" fill="#fff"/><path d="M18 18L22 18L21 27L13 25Z" fill="#2d6690"/><circle cy="110" r="4" fill="#020c4c"/></svg>
    <svg class="app-icon" viewBox="-47 0 94 118"><path d="M-22 50Q-33 62 -26 74M22 50Q33 62 26 74" fill="none" stroke="#a29f8a" stroke-width="5"/><path d="M-16 78A6 6 0 1 0 -21 84M16 78A6 6 0 1 1 21 84" fill="none" stroke="#35a05a" stroke-width="4.500"/><path d="M-5 79H5L0 84Z" fill="#b8aa80"/><path d="M0 14Q42 50 12 76Q6 80 0 80Q-6 80 -12 76Q-42 50 0 14Z" fill="#4cae50"/><path d="M-15 72Q0 80 15 72Q8 80 0 80Q-8 80 -15 72Z" fill="#2c9a48"/><circle cy="48" r="9" fill="#a7dfa9" stroke="#eef8ee" stroke-width="2"/><path d="M-6 61V66M-2 61V67M2 61V67M6 61V66" stroke="#2c8c3d" stroke-width="2"/><ellipse cy="94" rx="17" ry="1.500" fill="#7887a0"/><circle cy="110" r="4" fill="#020c4c"/></svg>
    <svg class="app-icon" viewBox="-47 0 94 118"><use href="#preview" x="-40" y="13" width="80" height="84"/><circle cy="110" r="4" fill="#020c4c"/></svg>
    <svg class="app-icon" viewBox="-47 0 94 118"><rect x="-37" y="17" width="75" height="75" rx="4" fill="#464646"/><path d="M-22 40L22 27V43L4 48L22 53V69L-22 83V67L-4 62L-22 56Z" fill="#fd9624"/><path d="M-22 56L-4 62L22 69V60L4 53Z" fill="#e8821a" opacity=".5"/><circle cy="110" r="4" fill="#020c4c"/></svg>
    <svg class="app-icon" viewBox="-47 0 94 118"><path d="M-3 14L42 47L7 96L-40 56Z" fill="#0b8fbc"/><path d="M-3 14L16 33L-20 50L-40 56Z" fill="#27bde0"/><path d="M-40 56L0 50L42 47L7 96Z" fill="#0870a0" opacity=".7"/><path d="M-38 32Q-27 26 -25 40L-22 66Q-18 80 -8 79Q3 78 5 62Q9 44 6 37Q1 31 -5 38Q-9 50 -3 64Q6 78 18 73Q29 68 27 54Q25 36 19 24" fill="none" stroke="#d8970e" stroke-width="9"/><path d="M-38 32Q-27 26 -25 40L-22 66Q-18 80 -8 79Q3 78 5 62Q9 44 6 37Q1 31 -5 38Q-9 50 -3 64Q6 78 18 73Q29 68 27 54Q25 36 19 24" fill="none" stroke="#ffce3d" stroke-width="7" stroke-dasharray="6 .8"/><circle cy="110" r="4" fill="#020c4c"/></svg>
    <div class="divider"></div>
    <svg class="minis" viewBox="1894 0 592 118"><rect x="1921" y="30" width="80" height="50" fill="#fbfbfb"/><path d="M1921 36H2001M1956 36V80" stroke="#e4e4e4"/><path d="M1923 33H1940M1950 33H1962M1985 33H1998" stroke="#ccc" stroke-dasharray="3 2"/><use href="#mail" x="1972" y="62" width="30" height="36"/>
      <rect x="2014" y="27" width="81" height="55" fill="#f4f4f4"/><rect x="2014" y="32" width="81" height="4" fill="#9aaed0"/><rect x="2023" y="42" width="71" height="32" fill="#080f1f"/><rect x="2033" y="42" width="54" height="32" fill="#fafafa"/><path d="M2037 47H2060M2039 51H2072M2039 55H2066M2039 59H2069M2037 65H2080M2037 69H2075" stroke="#aaa"/><rect x="2014" y="78" width="81" height="4" fill="#4969b0"/><path d="M2018 80H2075" stroke="#dce6f4" stroke-width="3" stroke-dasharray="3 1"/><use href="#preview" x="2066" y="66" width="29" height="30"/>
      <rect x="2109" y="23" width="81" height="64" fill="#fcfcfc"/><rect x="2109" y="23" width="81" height="7" fill="#eee"/><path d="M2127 26.500H2161" stroke="#73a5dd" stroke-width="2" stroke-dasharray="2 3"/><rect x="2165" y="30" width="25" height="57" fill="#f0f0f0"/><path d="M2132 39H2152M2116 43H2163M2116 46H2154M2116 54H2162M2116 59H2141M2116 63H2148M2116 67H2135M2116 70H2150M2116 73H2144M2116 79H2134M2116 83H2150" stroke="#888" stroke-width="1" stroke-dasharray="6 1"/><path d="M2168 40H2174M2182 53H2187" stroke="#222" stroke-width="2.500"/>
      <rect x="2203" y="23" width="81" height="64" fill="#fcfcfc"/><rect x="2203" y="23" width="81" height="7" fill="#eee"/><path d="M2220 26.500H2254" stroke="#73a5dd" stroke-width="2" stroke-dasharray="2 3"/><rect x="2259" y="30" width="25" height="57" fill="#f0f0f0"/><path d="M2210 32H2240M2210 36H2227M2210 40H2251M2210 44H2255M2210 48H2243M2210 52H2226M2210 56H2254M2210 59H2250M2210 63H2255M2210 66H2232" stroke="#888" stroke-width="1" stroke-dasharray="6 1"/><path d="M2203 74H2259" stroke="#ddd"/><path d="M2262 40H2268M2276 53H2281" stroke="#222" stroke-width="2.500"/>
      <rect x="2294" y="27" width="86" height="55" rx="4" fill="#e4e4e4"/><rect x="2296" y="28" width="82" height="53" rx="3" fill="#060606"/><rect x="2299" y="32" width="76" height="46" fill="#fafafa"/><path d="M2300 34H2350M2300 38H2361M2300 42H2338M2300 47H2318M2322 47H2332M2344 47H2360M2300 51H2315M2322 51H2335M2344 51H2365M2300 55H2315M2322 55H2338M2344 55H2364M2300 60H2347M2300 64H2352M2300 69H2315M2324 69H2350M2300 73H2315M2324 73H2345" stroke="#888" stroke-width="1" stroke-dasharray="5 1"/>
      <path d="M2401 24L2408 88Q2410 94 2432 94Q2454 94 2456 88L2461 24Z" fill="url(#gTrash)"/><ellipse cx="2431" cy="24" rx="30.500" ry="9" fill="#b9babc" stroke="#e8e8e8" stroke-width="2"/><path d="M2405 23L2411 17L2417 20L2421 14L2428 19L2438 14L2446 20L2454 18L2457 26L2448 30L2430 32L2412 30Z" fill="#f5f5f5"/><path d="M2409 22L2415 20L2418 26L2413 27ZM2436 18L2442 25L2435 30ZM2446 22L2452 24L2448 29ZM2422 17L2428 20L2424 22Z" fill="#3c3c3c"/><path d="M2420 22H2428L2425 28Z" fill="#50b64e"/><path d="M2428 24H2432L2430 32Z" fill="#dd6a3c"/><path d="M2417 40Q2440 52 2450 38M2414 60L2436 52M2420 75L2448 60" fill="none" stroke="#fff" opacity=".35" stroke-width="4"/></svg>
  </footer>
</div>
</body>
</html>
```
FILE: styles.css
```css
* { box-sizing: border-box; }
body { margin: 0; width: 2560px; height: 1600px; overflow: hidden; }
svg { display: block; }
.defs { position: absolute; }
.desktop { position: relative; width: 2560px; height: 1600px; overflow: hidden; font-family: Inter, "Liberation Sans", sans-serif; }
.backdrop { position: absolute; inset: 0; width: 2560px; height: 1600px; }
.bgText { font: 23px Inter, sans-serif; fill: #8d8d8d; }
.bgText.big { font-size: 26px; fill: #aaa; }

.menubar {
  position: relative; height: 44px; padding-left: 42px;
  display: grid; align-items: center;
  grid-template-columns: 67px 146px 81px 87px 99px 130px 181px 126px 139px 737px 69px 49px 65px 58px 82px 200px 63px 56px 40px;
  background: linear-gradient(90deg, #cfdcf0, #d5e2f6 50%, #d0dff5);
  color: #1f2b40; font-size: 27px; line-height: 44px; letter-spacing: -.1px; white-space: nowrap;
}
.menubar span, .menubar b { position: relative; top: 1px; }
.apple { width: 26px; height: 32px; margin-top: -4px; }
.app { font-weight: 700; font-size: 27.5px; letter-spacing: .2px; }
.history { letter-spacing: .15px; }
.clock { letter-spacing: .35px; }
.pct { font-size: 25px; letter-spacing: -1.2px; }

.window {
  position: absolute; left: 4px; top: 46px; width: 2538px; height: 1432px;
  border-radius: 10px 10px 16px 16px; overflow: hidden; background: #fff;
}
.desktop::before {
  content: ""; position: absolute; left: 4px; top: 46px; width: 2538px; height: 1432px;
  border-radius: 10px 10px 16px 16px; box-shadow: 0 0 3px 1px #0a1322;
}
.tabstrip {
  height: 74px; display: flex; align-items: flex-start; position: relative;
  background: linear-gradient(90deg, #d8d8da, #d2d4d8 50%, #d7d8dc);
  box-shadow: inset 0 -1.5px #999b9e;
}
.lights { display: flex; gap: 16px; width: 145px; padding: 26px 0 0 24px; }
.lights i { width: 24px; height: 24px; border-radius: 50%; border: 1px solid #0002; }
.red { background: #fc615d; } .amber { background: #fdbc40; } .green { background: #34c84a; }
.tabs { display: flex; padding-top: 17px; }
.tab { position: relative; width: 104.84px; height: 57px; display: flex; padding: 13px 0 0 31px; font-size: 23px; line-height: 32px; color: #111; }
.tab .shape { position: absolute; left: 0; top: 0; width: 132px; height: 57px; overflow: visible; }
.tab .fav { position: relative; flex: none; width: 32px; height: 32px; }
.tab span { position: relative; flex: none; width: 30px; margin-left: 12px; overflow: hidden; white-space: nowrap; letter-spacing: -.7px; -webkit-mask-image: linear-gradient(90deg, #000 70%, transparent); mask-image: linear-gradient(90deg, #000 70%, transparent); }
.tab.on { width: 136px; }
.tab.on .shape { width: 136px; height: 58px; }
.close { position: relative; width: 16px; height: 16px; margin: 8px 0 0 21px; }
.newtab { width: 68px; height: 34px; margin: 32px 0 0 -9px; }
.sync { width: 26px; height: 24px; margin: 26px 0 0 22px; }
.profile { margin: 24px 0 0 10px; font-size: 24px; line-height: 32px; color: #111; }

.toolbar {
  height: 72px; padding-left: 20px; background: #f1f1f1; display: grid; align-items: center;
  grid-template-columns: 57px 56px 56px 52px 1911px 55px 56px 57px 55px 56px 59px 22px;
}
.url { width: 1888px; height: 54px; display: flex; align-items: center; padding: 0 12px; background: #fff; border: 1.5px solid #b5b5b5; border-radius: 7px; }
.url p { flex: 1; margin: 2px 0 0 12px; font-size: 27px; line-height: 50px; color: #000; letter-spacing: .1px; }
.url em { font-style: normal; color: #7d7d7d; }
.star { width: 32px; height: 32px; }
.extA { font: bold 17px "Liberation Sans", sans-serif; fill: #fff; }

.bookmarks {
  height: 48px; padding: 0 0 7px 27px; background: #f1f1f1; border-bottom: 2px solid #cecece;
  display: grid; align-items: center; color: #000; font-size: 24px; line-height: 36px; letter-spacing: 0; white-space: nowrap;
  grid-template-columns: 37px 84px 40px 150px 40px 111px 33px 206px 32px 276px 32px 269px 39px 271px 37px 560px 33px 41px 220px;
}
.bookmarks .tight { letter-spacing: -.2px; }
.bookmarks .wide { letter-spacing: .3px; }

.viewport { display: flex; height: 1238px; font-family: "Liberation Sans", Arial, sans-serif; color: #333; background: linear-gradient(180deg, transparent 94%, #eee 100%), #fff; }
.survey { flex: 1; padding: 0 110px 0 114px; overflow: hidden; }
.survey h1 { margin: -7px 0 0; font-size: 60px; line-height: 66px; font-weight: 400; letter-spacing: .8px; -webkit-text-stroke: 1.5px #333; }
.survey h2 { margin: 0; font-size: 48px; line-height: 53px; font-weight: 700; letter-spacing: -.4px; }
.survey h3 { margin: 18px 0 18px; font-size: 36px; line-height: 40px; font-weight: 400; letter-spacing: .72px; -webkit-text-stroke: .9px #333; white-space: nowrap; }
.survey hr { width: 2280px; margin: 39px 0 41px; height: 2px; border: 0; background: #eee; }
.survey hr.second { margin-top: 40px; }
.survey h3.n1 { letter-spacing: .15px; }
.survey h3.n2 { margin-top: 20px; letter-spacing: .5px; }
.survey input { display: block; width: 2280px; height: 68px; border: 2px solid #ccc; border-radius: 8px; background: #fff; box-shadow: inset 0 2px 3px rgba(0,0,0,.08); }
.survey section { height: 220px; }
.select {
  display: flex; align-items: center; justify-content: space-between; width: 310px; height: 50px; margin-top: 18px; padding: 0 20px 0 16px;
  border: 2px solid #aaa; border-radius: 10px; color: #999; font-size: 26px; line-height: 46px; letter-spacing: .15px; -webkit-text-stroke: .3px #999;
  background: linear-gradient(180deg, #fff 20%, #f6f6f6 50%, #eee 52%, #f4f4f4 100%);
  box-shadow: inset 0 0 6px #fff, 0 2px 2px rgba(0,0,0,.1);
}
.select i { border: 6.5px solid transparent; border-top: 11px solid #808080; border-bottom: 0; }
.track { width: 30px; border: solid #e8e8e8; border-width: 0 2px; background: linear-gradient(180deg, transparent 94%, #eee 100%), #fafafa; padding: 24px 0 0 6px; }
.thumb { width: 16px; height: 491px; border-radius: 8px; background: #c1c1c1; }

.dock {
  position: absolute; left: 74px; top: 1482px; width: 2412px; height: 118px; padding-left: 7px; display: flex;
  border-radius: 10px 10px 0 0;
  background: linear-gradient(180deg, rgba(90,95,100,.3), transparent 65%), linear-gradient(90deg, #5c82c8, #6288ca 28%, #7596d0 50%, #7595cf 74%, #8fa4cc 83%, #bfc1ca 92%, #cccdd6);
}
.app-icon { flex: none; width: 94.1px; height: 118px; overflow: visible; }
.divider { flex: none; width: 2px; height: 86px; margin: 16px 0 0 23px; background: #4c6ba5; }
.minis { flex: none; width: 592px; height: 118px; }
.badge { font: 22px Inter, sans-serif; fill: #fff; text-anchor: middle; }
.calM { font: 15px Inter, sans-serif; fill: #fff; text-anchor: middle; }
.calD { font: 300 37px Inter, sans-serif; fill: #222; text-anchor: middle; }
.ws { font: bold 26px "Open Sans", sans-serif; fill: #fff; text-anchor: middle; }
.pages { font: 9px Inter, sans-serif; fill: #fff; }
.petals rect { mix-blend-mode: multiply; }
```
